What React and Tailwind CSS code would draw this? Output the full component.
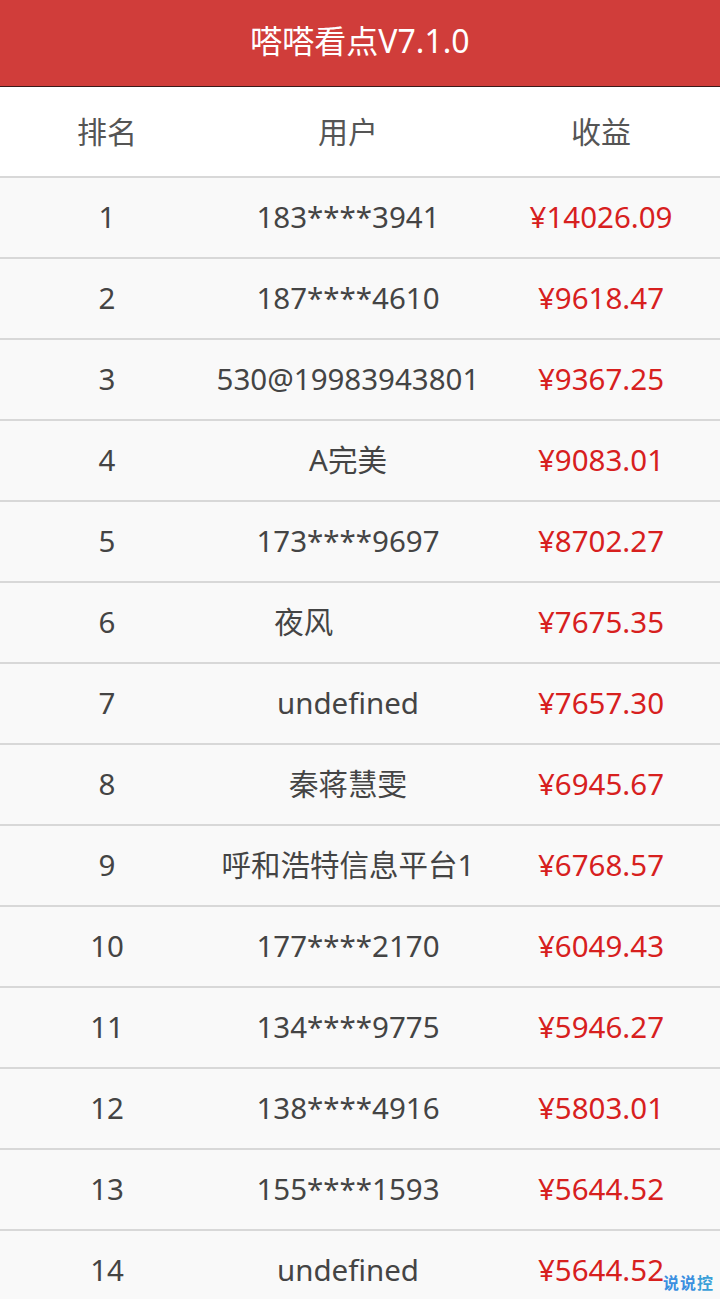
import React from 'react';

const rows = [
  ['1', '183****3941', '¥14026.09'],
  ['2', '187****4610', '¥9618.47'],
  ['3', '530@19983943801', '¥9367.25'],
  ['4', 'A完美', '¥9083.01'],
  ['5', '173****9697', '¥8702.27'],
  ['6', '夜风\u3000\u3000\u3000', '¥7675.35'],
  ['7', 'undefined', '¥7657.30'],
  ['8', '秦蒋慧雯', '¥6945.67'],
  ['9', '呼和浩特信息平台1', '¥6768.57'],
  ['10', '177****2170', '¥6049.43'],
  ['11', '134****9775', '¥5946.27'],
  ['12', '138****4916', '¥5803.01'],
  ['13', '155****1593', '¥5644.52'],
  ['14', 'undefined', '¥5644.52'],
];

export default function App() {
  return (
    <div
      className="relative w-[720px] h-[1299px] overflow-hidden bg-[#f9f9f9]"
      style={{ fontFamily: '"Noto Sans", "Noto Sans CJK SC", sans-serif' }}
    >
      <header className="h-[87px] bg-[#d03d3a] border-b border-[#3a1a1a] flex items-center justify-center">
        <h1 className="text-white text-[32px] font-normal leading-none pb-1">嗒嗒看点V7.1.0</h1>
      </header>

      <div className="grid grid-cols-[214px_268px_238px] h-[89px] bg-white items-center text-[30px] text-[#555]">
        <div className="text-center">排名</div>
        <div className="text-center">用户</div>
        <div className="text-center">收益</div>
      </div>

      {rows.map(([rank, user, money]) => (
        <div
          key={rank}
          className="grid grid-cols-[214px_268px_238px] h-[81px] border-t-2 border-[#d8d8d8] items-center text-[29.5px]"
        >
          <div className="text-center text-[#444]">{rank}</div>
          <div className="text-center text-[#444] whitespace-pre">{user}</div>
          <div className="text-center text-[#d7201e]">{money}</div>
        </div>
      ))}

      <div className="absolute right-[6px] bottom-[4px] text-[16px] font-semibold tracking-[1px]">
        <span className="text-[#3b8fe0]">说</span>
        <span className="text-[#3b8fe0]">说</span>
        <span className="text-[#3aa0d8]">控</span>
      </div>
    </div>
  );
}
